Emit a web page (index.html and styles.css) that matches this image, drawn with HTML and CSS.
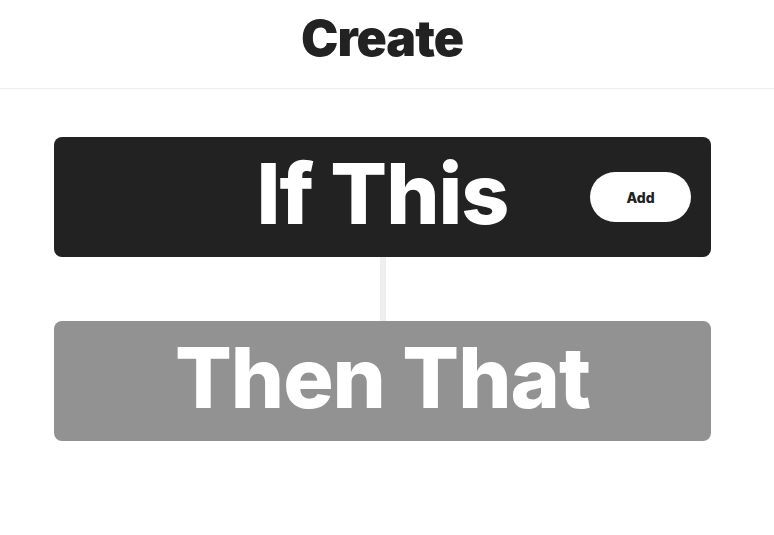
FILE: index.html
```html
<!DOCTYPE html>
<html>
<head>
<meta charset="utf-8">
<link rel="stylesheet" href="styles.css">
</head>
<body>
<header class="header">
  <h1 class="title">Create</h1>
</header>
<main class="main">
  <div class="step step-if">
    <span class="step-text">If This</span>
    <button class="add-btn">Add</button>
  </div>
  <div class="connector"></div>
  <div class="step step-then">
    <span class="step-text">Then That</span>
  </div>
</main>
</body>
</html>
```
FILE: styles.css
```css
* { box-sizing: border-box; }
html, body { margin: 0; padding: 0; background: #fff; }
body { font-family: Inter, "Noto Sans", sans-serif; color: #222; }
.header {
  height: 89px;
  border-bottom: 1px solid #eee;
  display: flex;
  justify-content: center;
  align-items: center;
  padding-right: 10px;
}
.title {
  margin: 0;
  font-size: 50px;
  font-weight: 900;
  color: #222;
  letter-spacing: -1px;
  line-height: 1;
  padding-bottom: 12px;
}
.main {
  padding: 48px 63px 0 54px;
  display: flex;
  flex-direction: column;
  align-items: center;
}
.step {
  position: relative;
  width: 100%;
  height: 120px;
  border-radius: 8px;
  display: flex;
  justify-content: center;
  align-items: center;
}
.step-if { background: #222; }
.step-then { background: #929292; }
.step-text {
  color: #fff;
  font-size: 84px;
  font-weight: 800;
  letter-spacing: -1px;
  line-height: 1;
  padding-bottom: 6px;
}
.connector {
  width: 6px;
  height: 64px;
  background: #eee;
}
.add-btn {
  position: absolute;
  right: 20px;
  top: 35px;
  width: 101px;
  height: 50px;
  border: none;
  border-radius: 25px;
  background: #fff;
  color: #222;
  font-family: Inter, sans-serif;
  font-weight: 800;
  font-size: 14px;
  cursor: pointer;
}
```
